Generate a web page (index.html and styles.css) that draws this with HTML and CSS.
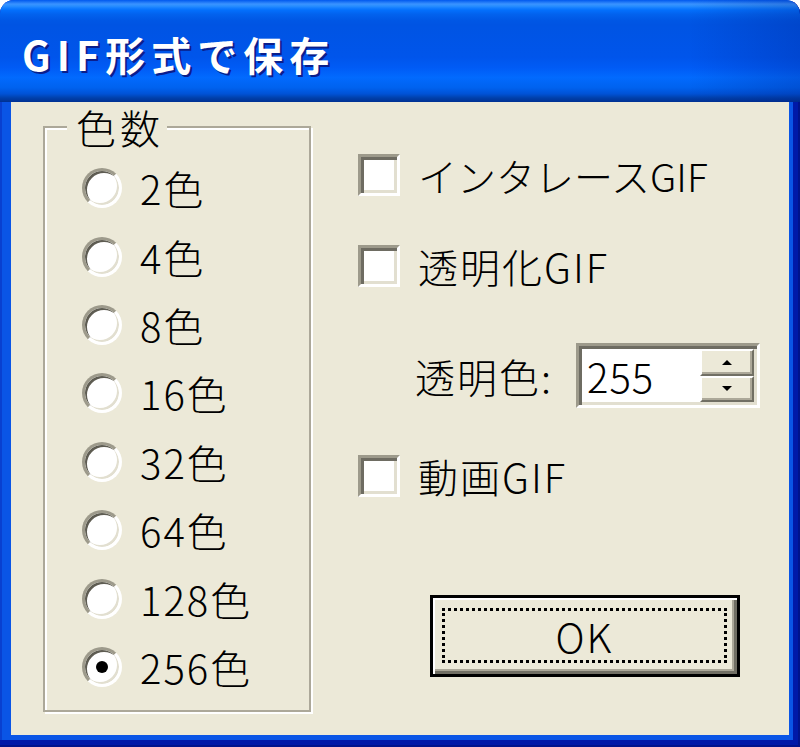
FILE: index.html
```html
<!DOCTYPE html>
<html lang="ja">
<head>
<meta charset="utf-8">
<title>GIF形式で保存</title>
<link rel="stylesheet" href="styles.css">
</head>
<body>
<div class="window">
  <div class="titlebar"><span class="title">GIF形式で保存</span></div>
  <div class="client">
    <fieldset class="group">
      <legend class="legend">色数</legend>
      <div class="radio-list">
        <div class="radio-row"><span class="radio"></span><span class="label">2色</span></div>
        <div class="radio-row"><span class="radio"></span><span class="label">4色</span></div>
        <div class="radio-row"><span class="radio"></span><span class="label">8色</span></div>
        <div class="radio-row"><span class="radio"></span><span class="label">16色</span></div>
        <div class="radio-row"><span class="radio"></span><span class="label">32色</span></div>
        <div class="radio-row"><span class="radio"></span><span class="label">64色</span></div>
        <div class="radio-row"><span class="radio"></span><span class="label">128色</span></div>
        <div class="radio-row"><span class="radio checked"></span><span class="label">256色</span></div>
      </div>
    </fieldset>
    <div class="options">
      <div class="check-row row-interlace"><span class="check"></span><span class="label label-tight">インタレースGIF</span></div>
      <div class="check-row row-transparent"><span class="check"></span><span class="label">透明化GIF</span></div>
      <div class="spin-row">
        <span class="label">透明色:</span>
        <div class="spin">
          <span class="spin-value">255</span>
          <div class="spin-buttons">
            <span class="spin-btn up"></span>
            <span class="spin-btn down"></span>
          </div>
        </div>
      </div>
      <div class="check-row row-anim"><span class="check"></span><span class="label">動画GIF</span></div>
      <div class="ok-button"><span class="focus-rect">OK</span></div>
    </div>
  </div>
</div>
</body>
</html>
```

FILE: styles.css
```css
* { box-sizing: border-box; }
html, body { margin: 0; padding: 0; background: #ffffff; }
body { font-family: "Noto Sans CJK JP", "Noto Sans", sans-serif; color: #000; }

.window {
  width: 800px;
  height: 747px;
  display: flex;
  flex-direction: column;
  border-radius: 14px 14px 0 0;
  overflow: hidden;
  background: #0A55E6;
  box-shadow: inset -2px -2px 0 #00138C, inset -7px -7px 0 #0019A8, inset 2px 0 0 #0940D0;
}

.titlebar {
  height: 102px;
  flex: none;
  display: flex;
  align-items: center;
  padding: 6px 0 0 22px;
  border-radius: 14px 14px 0 0;
  background:
    linear-gradient(90deg, rgba(0,0,0,0) 86%, rgba(0,20,120,0.22) 100%),
    linear-gradient(180deg, #0058EE 0%, #3A93FF 4%, #288EFF 6%, #127DFF 8%, #036FFC 10%, #0262EE 14%, #0057E5 20%, #0054E3 24%, #0055EB 56%, #005BF5 66%, #026AFE 76%, #0062EF 86%, #0052D6 92%, #0040AB 96%, #003092 100%);
}

.title {
  color: #ffffff;
  font-weight: 700;
  font-size: 40px;
  line-height: 1;
  letter-spacing: 6px;
  text-shadow: 2px 2px 0 #0A1E8C;
}

.client {
  flex: 1;
  margin: 0 11px 12px 11px;
  background: #ECE9D8;
  display: flex;
  align-items: flex-start;
}

.label {
  font-size: 40px;
  font-weight: 300;
  line-height: 1;
  letter-spacing: 2px;
  white-space: nowrap;
}

.label-tight { letter-spacing: 0; font-size: 39px; }

/* Group box */
.group {
  margin: 7px 0 0 32px;
  width: 268px;
  padding: 9px 0 9px 22px;
  border: 2px solid #ACA899;
  box-shadow: 2px 2px 0 #ffffff, inset 2px 2px 0 #ffffff;
  min-width: 0;
}

.legend {
  padding: 0 3px 0 9px;
  background: #ECE9D8;
  font-size: 40px;
  font-weight: 300;
  line-height: 36px;
  letter-spacing: 4px;
}

.radio-list {
  display: flex;
  flex-direction: column;
  margin-left: 15px;
}

.radio-row {
  height: 68.4px;
  display: flex;
  align-items: center;
  gap: 18px;
}

.radio {
  width: 40px;
  height: 40px;
  flex: none;
  border-radius: 50%;
  background: #ffffff;
  border: 3px solid;
  border-color: #9D9A8B #ffffff #ffffff #9D9A8B;
  box-shadow: inset 2px 2px 0 #5E5C52, inset -2px -2px 0 #E2DFD0;
  position: relative;
}

.radio.checked::after {
  content: "";
  position: absolute;
  left: 50%;
  top: 50%;
  width: 12px;
  height: 12px;
  margin: -6px 0 0 -6px;
  border-radius: 50%;
  background: #000;
}

/* Right column */
.options {
  display: flex;
  flex-direction: column;
  margin-left: 47px;
  padding-top: 50px;
}

.check-row {
  height: 46px;
  display: flex;
  align-items: center;
  gap: 18px;
}

.row-transparent { margin-top: 45px; }
.row-anim { margin-top: 45px; }

.check {
  width: 42px;
  height: 42px;
  flex: none;
  background: #ffffff;
  border: 3px solid;
  border-color: #9D9A8B #ffffff #ffffff #9D9A8B;
  box-shadow: inset 3px 3px 0 #6E6C62, inset -3px -3px 0 #E2DFD0;
}

.spin-row {
  margin-top: 54px;
  margin-left: 57px;
  height: 65px;
  display: flex;
  align-items: center;
  gap: 23px;
}

.spin {
  width: 184px;
  height: 65px;
  display: flex;
  align-items: center;
  background: #ffffff;
  border: 3px solid;
  border-color: #9D9A8B #ffffff #ffffff #9D9A8B;
  box-shadow: inset 3px 3px 0 #6E6C62, inset -3px -3px 0 #E2DFD0;
  padding: 3px 3px 3px 8px;
}

.spin-value {
  flex: 1;
  font-size: 40px;
  font-weight: 300;
  line-height: 1;
  letter-spacing: 1px;
}

.spin-buttons {
  width: 54px;
  height: 100%;
  display: flex;
  flex-direction: column;
}

.spin-btn {
  flex: 1;
  background: #ECE9D8;
  border: 2px solid;
  border-color: #ffffff #716F64 #716F64 #ffffff;
  box-shadow: inset -2px -2px 0 #ACA899;
  display: flex;
  align-items: center;
  justify-content: center;
}

.spin-btn::before {
  content: "";
  width: 0;
  height: 0;
  border-left: 5px solid transparent;
  border-right: 5px solid transparent;
}

.spin-btn.up::before { border-bottom: 5px solid #000; }
.spin-btn.down::before { border-top: 5px solid #000; }

.ok-button {
  margin-top: 96px;
  margin-left: 72px;
  width: 310px;
  height: 82px;
  border: 3px solid #000;
  background: #ECE9D8;
  box-shadow: inset 2px 2px 0 #ffffff, inset -3px -3px 0 #716F64, inset -5px -5px 0 #ACA899;
  padding: 10px 10px 11px 9px;
  display: flex;
}

.focus-rect {
  flex: 1;
  border: 3px dotted #000;
  display: flex;
  align-items: center;
  justify-content: center;
  font-size: 40px;
  font-weight: 300;
  line-height: 1;
  letter-spacing: 2px;
}
```
